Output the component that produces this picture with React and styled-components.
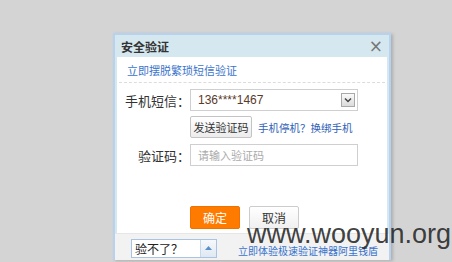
import React from 'react'
import styled, { createGlobalStyle } from 'styled-components'

const GlobalStyle = createGlobalStyle`
  html, body {
    margin: 0;
    padding: 0;
    background: #d4d4d4;
  }
  body {
    font-family: 'Liberation Sans', 'Noto Sans CJK SC', sans-serif;
    font-size: 12px;
  }
`

const Page = styled.div`
  position: relative;
  width: 452px;
  height: 262px;
  overflow: hidden;
  padding-top: 33px;
  box-sizing: border-box;
`

const Dialog = styled.div`
  margin-left: 113px;
  width: 278px;
  box-sizing: border-box;
  border: 2px solid #b6d2ee;
  border-bottom: none;
  background: #d6e8ef;
  box-shadow: 2px 1px 3px rgba(0, 0, 0, 0.18);
`

const TitleBar = styled.div`
  height: 22px;
  display: flex;
  align-items: center;
  justify-content: space-between;
  padding: 0 6px 0 6px;
`

const Title = styled.span`
  font-weight: bold;
  color: #333;
  font-size: 12px;
`

const Close = styled.span`
  color: #777;
  font-size: 17px;
  line-height: 1;
  font-family: 'DejaVu Sans', sans-serif;
`

const Body = styled.div`
  margin: 0 2px;
  background: #fff;
`

const TopLink = styled.div`
  height: 25px;
  margin: 0 2px;
  padding-left: 8px;
  display: flex;
  align-items: center;
  border-bottom: 1px dashed #dcdcdc;
`

const Link = styled.a`
  color: ${p => p.$dark ? '#2f62b8' : '#3a74cc'};
  text-decoration: none;
  font-size: ${p => p.$size || 11}px;
  white-space: nowrap;
`

const Form = styled.div`
  padding-top: 6px;
  height: 123px;
  box-sizing: border-box;
`

const Row = styled.div`
  display: flex;
  align-items: center;
  margin-bottom: ${p => p.$gap || 5}px;
`

const Label = styled.label`
  width: 73px;
  text-align: right;
  color: #333;
  font-size: 13px;
  flex-shrink: 0;
`

const Spacer = styled.div`
  width: 73px;
  flex-shrink: 0;
`

const Field = styled.div`
  width: 168px;
  height: 22px;
  box-sizing: border-box;
  border: 1px solid #cfcfcf;
  display: flex;
  align-items: center;
  justify-content: space-between;
  padding: 0 2px 0 7px;
  color: ${p => p.$placeholder ? '#aaa' : '#5a3a2a'};
  font-size: ${p => p.$placeholder ? 11 : 12}px;
  background: #fff;
`

const Arrow = styled.span`
  width: 14px;
  height: 14px;
  box-sizing: border-box;
  border: 1px solid #a9a9a9;
  background: linear-gradient(#fafafa, #dcdcdc);
  display: flex;
  align-items: center;
  justify-content: center;
`

const SendButton = styled.button`
  height: 22px;
  width: 62px;
  padding: 0;
  box-sizing: border-box;
  border: 1px solid #c4c4c4;
  border-radius: 2px;
  background: linear-gradient(#ffffff, #ececec);
  font-family: inherit;
  font-size: 11px;
  color: #333;
  margin-right: 6px;
`

const Actions = styled.div`
  display: flex;
  gap: 9px;
  padding-left: 73px;
  height: 27px;
`

const ActionButton = styled.button`
  width: 50px;
  height: 23px;
  box-sizing: border-box;
  border-radius: 2px;
  font-family: inherit;
  font-size: 12px;
  padding: 0;
  border: 1px solid ${p => p.$primary ? '#f07000' : '#cccccc'};
  background: ${p => p.$primary ? '#ff7b00' : 'linear-gradient(#ffffff, #f0f0f0)'};
  color: ${p => p.$primary ? '#fff' : '#333'};
`

const Footer = styled.div`
  margin: 0 -2px;
  height: 26px;
  background: #f2f2f2;
  border-top: 1px solid #e6e6e6;
  display: flex;
  align-items: center;
  padding-left: 16px;
  gap: 21px;
`

const Select = styled.div`
  width: 86px;
  height: 19px;
  box-sizing: border-box;
  border: 1px solid #a9c4e2;
  background: #fff;
  display: flex;
  align-items: center;
  justify-content: space-between;
  padding-left: 3px;
  color: #222;
  font-size: 12px;
  margin-top: 2px;
`

const SelectArrow = styled.span`
  width: 15px;
  height: 17px;
  border-left: 1px solid #c8d8ea;
  background: linear-gradient(#f6f9fc, #dfe8f2);
  display: flex;
  align-items: center;
  justify-content: center;
`

const FooterLink = styled(Link)`
  margin-top: 6px;
`

const Watermark = styled.div`
  position: absolute;
  left: 247px;
  top: 219px;
  font-family: 'Liberation Sans', sans-serif;
  font-size: 27px;
  color: rgba(40, 40, 40, 0.9);
  white-space: nowrap;
  pointer-events: none;
`

const App = () => {
  return (
    <>
      <GlobalStyle />
      <Page>
        <Dialog>
          <TitleBar>
            <Title>安全验证</Title>
            <Close>×</Close>
          </TitleBar>
          <Body>
            <TopLink>
              <Link>立即摆脱繁琐短信验证</Link>
            </TopLink>
            <Form>
              <Row>
                <Label>手机短信：</Label>
                <Field>
                  136****1467
                  <Arrow>
                    <svg width="8" height="6" viewBox="0 0 8 6">
                      <path d="M1 1.5 L4 4.5 L7 1.5" stroke="#444" strokeWidth="1.5" fill="none" />
                    </svg>
                  </Arrow>
                </Field>
              </Row>
              <Row $gap={6}>
                <Spacer />
                <SendButton>发送验证码</SendButton>
                <Link $dark $size={10.5}>手机停机？换绑手机</Link>
              </Row>
              <Row>
                <Label>验证码：</Label>
                <Field $placeholder>请输入验证码</Field>
              </Row>
            </Form>
            <Actions>
              <ActionButton $primary>确定</ActionButton>
              <ActionButton>取消</ActionButton>
            </Actions>
            <Footer>
              <Select>
                验不了？
                <SelectArrow>
                  <svg width="7" height="4" viewBox="0 0 7 4">
                    <path d="M0 4 L3.5 0 L7 4 Z" fill="#5a8fc8" />
                  </svg>
                </SelectArrow>
              </Select>
              <FooterLink $size={10}>立即体验极速验证神器阿里钱盾</FooterLink>
            </Footer>
          </Body>
        </Dialog>
        <Watermark>www.wooyun.org</Watermark>
      </Page>
    </>
  )
}

export default App
